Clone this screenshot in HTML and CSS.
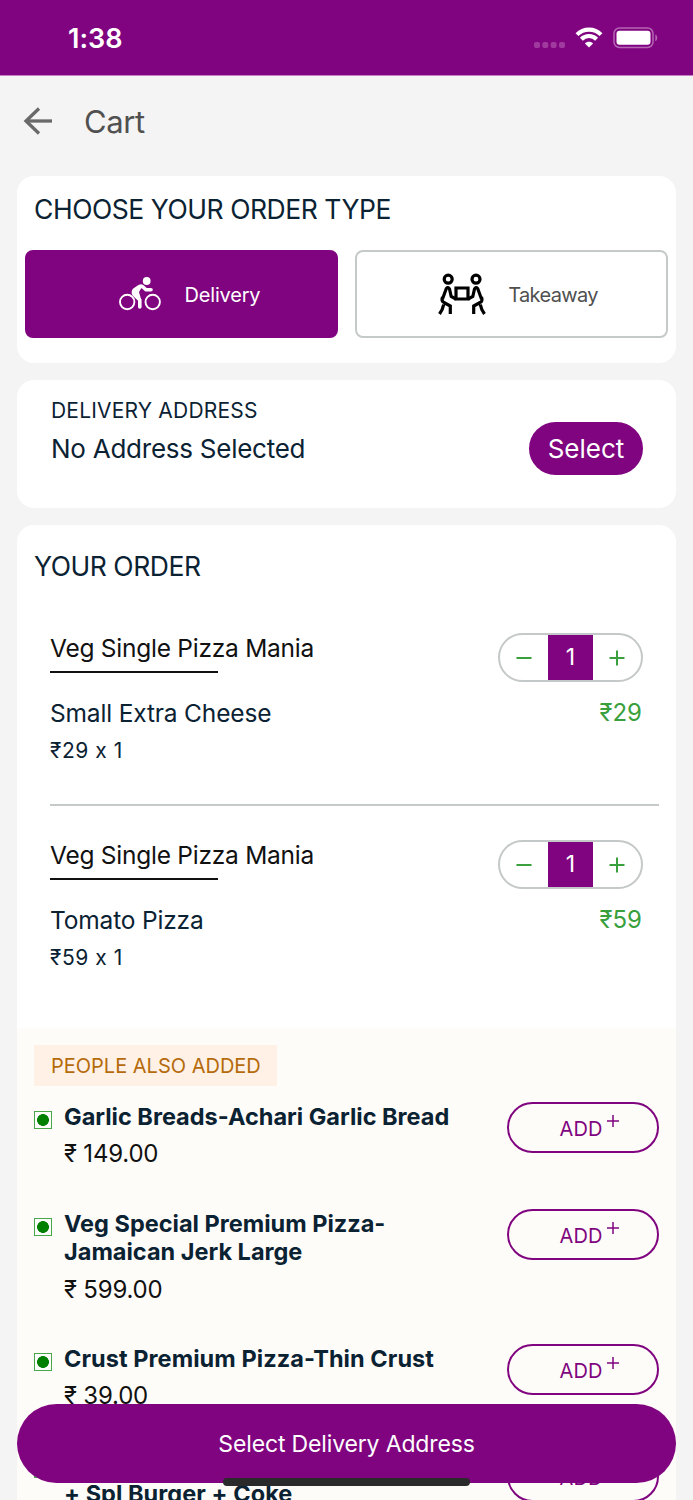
FILE: index.html
```html
<!DOCTYPE html>
<html lang="en">
<head>
<meta charset="utf-8">
<title>Cart</title>
<link rel="stylesheet" href="styles.css">
</head>
<body>
<svg class="defs" width="0" height="0">
  <symbol id="minus" viewBox="0 0 16 16"><path d="M.5 8h15" stroke="currentColor" stroke-width="2"/></symbol>
  <symbol id="plus" viewBox="0 0 16 16"><path d="M.5 8h15M8 .5v15" stroke="currentColor" stroke-width="2"/></symbol>
  <symbol id="plus-thin" viewBox="0 0 12 12"><path d="M0 6h12M6 0v12" stroke="currentColor" stroke-width="1.5"/></symbol>
</svg>
<div class="screen">
  <header class="status">
    <span class="clock">1:38</span>
    <div class="status-icons">
      <svg class="dots" width="32" height="6" viewBox="0 0 32 6"><g fill="#a03a9f"><rect x="0" width="6" height="6" rx="2"/><rect x="8.3" width="6" height="6" rx="2"/><rect x="16.6" width="6" height="6" rx="2"/><rect x="25" width="6" height="6" rx="2"/></g></svg>
      <svg class="wifi" width="28" height="21" viewBox="0 0 28 21"><g fill="none" stroke="#fff" stroke-width="4.1"><path d="M2 7.6C8.500 1 19.500 1 26 7.600"/><path d="M6.400 12.200C10.600 8 17.400 8 21.600 12.200"/></g><path d="M14 20.500 9.900 16.500C12 14 16 14 18.100 16.500Z" fill="#fff"/></svg>
      <svg class="battery" width="46" height="22" viewBox="0 0 46 22"><rect x="1" y="1" width="39" height="19.500" rx="5.500" fill="none" stroke="#b566b3" stroke-width="1.500"/><rect x="3.500" y="3.700" width="34" height="14" rx="3" fill="#fff"/><path d="M42.300 7.500c2.600 1 2.600 5.800 0 6.800z" fill="#b566b3"/></svg>
    </div>
  </header>
  <nav class="topbar">
    <svg width="30" height="30" viewBox="0 0 30 30" fill="none" stroke="#696969" stroke-width="3.300"><path d="M29 15H3"/><path d="M16 2.500 3 15 16 27.500"/></svg>
    <h1>Cart</h1>
  </nav>
  <main>
    <section class="card order-type">
      <h2>CHOOSE YOUR ORDER TYPE</h2>
      <div class="choices">
        <button class="choice active">
          <svg width="42" height="34" viewBox="0 0 42 34"><g fill="none" stroke="#fff" stroke-width="1.900"><circle cx="8.200" cy="25" r="7.200"/><circle cx="33.700" cy="25" r="7.200"/></g><circle cx="27.700" cy="4" r="3.900" fill="#fff"/><path d="M20.800 30V23L15 17.500Q13.500 14.500 16 12.500L20.500 9.500Q22.500 8.300 24.300 10.200L27 12.800H32" fill="none" stroke="#fff" stroke-width="3.600" stroke-linecap="round" stroke-linejoin="round"/><path d="M13.500 13 19.500 8.200H24L20 15 22 22H19Z" fill="#fff"/></svg>
          <span>Delivery</span>
        </button>
        <button class="choice takeaway">
          <svg width="50" height="42" viewBox="0 0 50 42" fill="none" stroke="#000" stroke-width="3.200"><circle cx="11.200" cy="6.200" r="4"/><circle cx="39" cy="6.200" r="4"/><path d="M19 15H31V26H19Z"/><path d="M5.500 26 9.300 15.500Q11.200 13.500 12.500 16L14.200 23.500 19 26M5.500 24Q4 28.500 7 29.500L13.300 33V41M6.700 31.500Q6 36 2.500 41"/><path d="M44.500 26 40.700 15.500Q38.800 13.500 37.500 16L35.800 23.500 31 26M44.500 24Q46 28.500 43 29.500L36.700 33V41M43.300 31.500Q44 36 47.500 41"/></svg>
          <span>Takeaway</span>
        </button>
      </div>
    </section>

    <section class="card address">
      <div>
        <h3>DELIVERY ADDRESS</h3>
        <p>No Address Selected</p>
      </div>
      <button class="select">Select</button>
    </section>

    <section class="card order">
      <h2 class="order-title">YOUR ORDER</h2>
      <article class="line">
        <div>
          <h4>Veg Single Pizza Mania</h4>
          <p class="variant">Small Extra Cheese</p>
          <p class="calc">₹29 x 1</p>
        </div>
        <div class="line-end">
          <div class="stepper"><svg><use href="#minus"/></svg><b>1</b><svg><use href="#plus"/></svg></div>
          <span class="total">₹29</span>
        </div>
      </article>
      <article class="line">
        <div>
          <h4>Veg Single Pizza Mania</h4>
          <p class="variant">Tomato Pizza</p>
          <p class="calc">₹59 x 1</p>
        </div>
        <div class="line-end">
          <div class="stepper"><svg><use href="#minus"/></svg><b>1</b><svg><use href="#plus"/></svg></div>
          <span class="total">₹59</span>
        </div>
      </article>

      <div class="also">
        <span class="tag">PEOPLE ALSO ADDED</span>
        <article class="extra">
          <i class="veg"></i>
          <div class="info"><h5>Garlic Breads-Achari Garlic Bread</h5><p>₹ 149.00</p></div>
          <button class="add">ADD<svg><use href="#plus-thin"/></svg></button>
        </article>
        <article class="extra">
          <i class="veg"></i>
          <div class="info"><h5>Veg Special Premium Pizza-<br>Jamaican Jerk Large</h5><p>₹ 599.00</p></div>
          <button class="add">ADD<svg><use href="#plus-thin"/></svg></button>
        </article>
        <article class="extra">
          <i class="veg"></i>
          <div class="info"><h5 class="wide">Crust Premium Pizza-Thin Crust</h5><p>₹ 39.00</p></div>
          <button class="add">ADD<svg><use href="#plus-thin"/></svg></button>
        </article>
        <article class="extra">
          <i class="veg"></i>
          <div class="info"><h5 class="wide">&nbsp;<br>+ Spl Burger + Coke</h5></div>
          <button class="add">ADD<svg><use href="#plus-thin"/></svg></button>
        </article>
      </div>
    </section>
  </main>
  <button class="checkout">Select Delivery Address</button>
  <div class="home"></div>
</div>
</body>
</html>
```
FILE: styles.css
```css
* { box-sizing: border-box; margin: 0; padding: 0; }
body { background: #f4f4f4; font-family: Inter, "Noto Sans", sans-serif; font-feature-settings: "calt" 0; color: #0b2233; }
button { font: inherit; border: 0; background: none; }
svg { display: block; flex: none; }
.defs { position: absolute; }
.screen { position: relative; width: 693px; height: 1500px; overflow: hidden; }

.status { height: 75px; background: #80047f; display: flex; justify-content: space-between; padding: 0 34px 0 68px; box-shadow: 0 1px #c77fc6; }
.clock { font-size: 27px; font-weight: 600; line-height: 77px; color: #fff; }
.status-icons { display: flex; align-items: flex-start; padding-top: 27px; }
.dots { margin: 15px 9px 0 0; }
.battery { margin-left: 10px; }

.topbar { height: 101px; padding: 0 23px 9px; display: flex; align-items: center; gap: 31px; }
.topbar h1 { font-size: 31px; font-weight: 400; line-height: 40px; letter-spacing: -.4px; padding-top: 2px; color: #505050; }

main { padding: 0 17px; display: flex; flex-direction: column; gap: 17px; }
.card { background: #fff; border-radius: 17px; }
h2 { font-size: 26.500px; font-weight: 400; line-height: 32px; letter-spacing: -.45px; padding-left: 17px; white-space: nowrap; }
.order-type { height: 187px; padding-top: 17px; }
.choices { display: grid; grid-template-columns: 1fr 1fr; gap: 17px; padding: 25px 8px 0; }
.choice { height: 88px; border-radius: 8px; border: 2px solid #c5cac9; display: flex; align-items: center; justify-content: center; gap: 21px; padding: 0 0 1px 12px; font-size: 20px; color: #505050; }
.choice span { padding-top: 2px; }
.choice.active { background: #80047f; border-color: #80047f; color: #fff; gap: 24px; padding-left: 16px; letter-spacing: -.2px; }
.takeaway span { letter-spacing: -.65px; }

.address { height: 128px; padding: 18px 33px 0 34px; display: flex; justify-content: space-between; }
.address h3 { font-size: 21px; font-weight: 400; line-height: 26px; letter-spacing: .2px; }
.address p { font-size: 26px; line-height: 32px; letter-spacing: -.25px; margin-top: 9px; }
.select { width: 114px; height: 53px; border-radius: 27px; background: #80047f; color: #fff; font-size: 26px; margin-top: 24px; }

.order { overflow: hidden; padding-top: 25px; height: 1100px; }
.order-title { margin-bottom: 51px; }
.line { display: flex; justify-content: space-between; margin: 0 17px 0 33px; padding-right: 16px; }
.line + .line { height: 188px; }
.line:first-of-type { height: 173px; border-bottom: 2px solid #c5cac9; margin-bottom: 34px; }
h4 { font-size: 24.500px; font-weight: 400; line-height: 32px; letter-spacing: -.25px; margin-top: -1px; color: #111; }
h4::after { content: ""; display: block; width: 168px; height: 2px; background: #111; margin-top: 7px; }
.variant { font-size: 24.500px; line-height: 32px; letter-spacing: -.17px; margin-top: 24px; }
.calc { font-size: 21px; line-height: 28px; letter-spacing: .55px; margin-top: 8px; }
.line-end { display: flex; flex-direction: column; align-items: flex-end; }
.stepper { width: 145px; height: 49px; border: 2px solid #c5c8c8; border-radius: 25px; display: flex; align-items: center; justify-content: space-between; overflow: hidden; color: #39a03d; padding: 0 16px; }
.stepper b { width: 45px; line-height: 47px; text-align: center; background: #80047f; color: #fff; font-size: 23px; font-weight: 400; }
.stepper svg { width: 16px; height: 16px; }
.total { color: #39a03d; font-size: 24px; line-height: 30px; margin: 16px 1px 0 0; }

.also { background: #fefcf8; padding: 17px 17px 0; }
.tag { display: block; width: 243px; height: 41px; padding-left: 17px; line-height: 42px; background: #fff1e6; color: #b56b0b; font-size: 20px; white-space: nowrap; }
.extra { display: flex; align-items: flex-start; padding-top: 16px; height: 107px; }
.extra:nth-of-type(2) { height: 135px; }
.veg { width: 18px; height: 18px; margin-top: 9px; border: 1px solid #4aa64a; background: radial-gradient(circle, #008000 5.600px, transparent 6.200px), #fff; }
.info { flex: 1; padding: 1px 0 0 12px; }
h5 { font-size: 23.500px; font-weight: 700; line-height: 28.300px; letter-spacing: 0; white-space: nowrap; }
h5.wide { letter-spacing: .06px; }
.info p { color: #111; font-size: 24px; line-height: 30px; letter-spacing: -.2px; margin-top: 8px; }
.add { flex: none; width: 152px; height: 51px; border: 2px solid #80047f; border-radius: 26px; color: #80047f; font-size: 20px; letter-spacing: .1px; display: flex; align-items: center; justify-content: flex-start; gap: 5px; padding: 2px 0 0 50.500px; }
.add svg { width: 12px; height: 12px; margin-top: -15px; }

.checkout { position: absolute; left: 17px; top: 1404px; width: 659px; height: 79px; border-radius: 40px; background: #80047f; color: #fff; font-size: 23px; letter-spacing: -.15px; }
.home { position: absolute; left: 223px; top: 1478px; width: 247px; height: 8px; border-radius: 4px; background: #2b2a2b; }
```
